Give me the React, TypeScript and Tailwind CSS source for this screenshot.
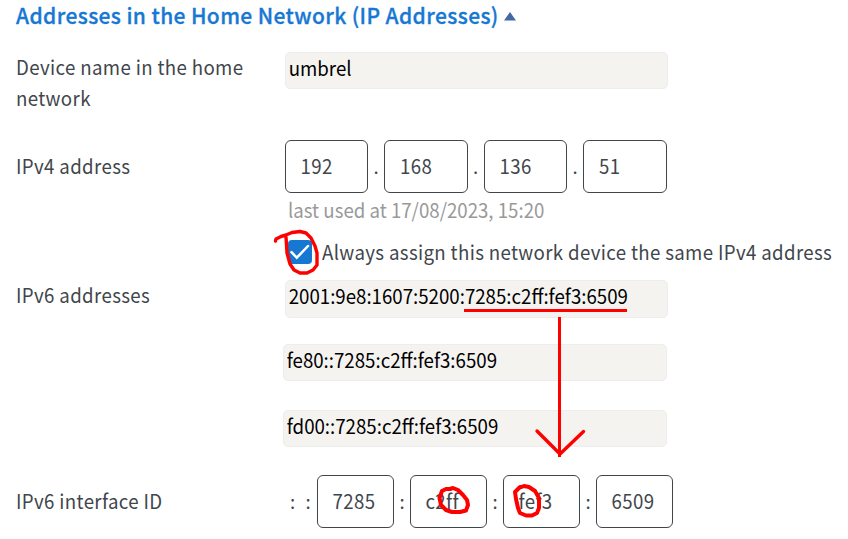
import type { ReactNode } from "react";

const ipv4 = ["192", "168", "136", "51"];
const interfaceId = ["7285", "c2ff", "fef3", "6509"];

function Tall({ children }: { children: ReactNode }) {
  return <span className="inline-block origin-[0_71%] scale-y-[1.075]">{children}</span>;
}

function Label({ lines, className = "" }: { lines: string[]; className?: string }) {
  return (
    <div className={`-mt-px w-[269px] shrink-0 leading-[31px] tracking-[0.36px] ${className}`}>
      {lines.map((line) => (
        <div key={line}>
          <Tall>{line}</Tall>
        </div>
      ))}
    </div>
  );
}

function ReadOnly({ children, className = "" }: { children: ReactNode; className?: string }) {
  return (
    <div
      className={`rounded-[5px] border border-[#ededed] bg-[#f5f3f0] px-[2.7px] text-[18.68px] leading-[30px] text-black ${className}`}
    >
      <Tall>{children}</Tall>
    </div>
  );
}

function Box({ children, className = "" }: { children: ReactNode; className?: string }) {
  return (
    <div
      className={`h-[53px] shrink-0 rounded-[6px] border border-[#3f464c] bg-white pl-[14.5px] leading-[49px] tracking-[0.36px] ${className}`}
    >
      <span className="inline-block origin-[0_63%] scale-y-[1.075]">{children}</span>
    </div>
  );
}

function Marks() {
  return (
    <svg
      className="pointer-events-none absolute left-0 top-0"
      width="848"
      height="539"
      fill="none"
      stroke="#ff0000"
      strokeWidth="3.4"
      strokeLinecap="round"
      strokeLinejoin="round"
    >
      <path d="M275.5 241L276 239L281 236.5L286 235L292 232.5L300 231.5L306 233L311 238L315 246L317 253L317 265L313 270L307 273L300 273L294 270L290 264L287 253L286 237" />
      <path d="M464 310.5H627" strokeWidth="3" strokeLinecap="butt" />
      <path d="M559.5 317V457" strokeWidth="3" strokeLinecap="butt" />
      <path d="M537 431L560 454L583.5 431.5" />
      <path d="M442 491L446 489L450 489L453 488L458 490L463 495L467 500L468 505L466 510.5L460 512L452 512L446 510L441 505L439.5 498L442 491" strokeWidth="4" />
      <path d="M519 488L524 486L529 487L535 491L539 498L539 508L537 513L532 515.5L526 515.5L520 513L518 508L516 499L515 492L520 487" strokeWidth="4" />
    </svg>
  );
}

export default function App() {
  return (
    <main className="relative h-[539px] w-[848px] overflow-hidden bg-white pl-4 font-['Noto_Sans_CJK_SC',sans-serif] text-[18.66px] text-[#3f464c]">
      <h2 className="flex h-[52px] items-start text-[21px] font-medium leading-[32px] tracking-[0.38px] text-[#1778d3] [-webkit-text-stroke:0.3px_#1778d3]">
        <span className="-mt-px inline-block origin-[0_73%] scale-y-[1.03]">Addresses in the Home Network (IP Addresses)</span>
        <svg className="ml-[5px] mt-3" width="12" height="9" viewBox="0 0 12 9" fill="#4268a5">
          <path d="M6 0L12 8.5H0Z" />
        </svg>
      </h2>

      <section className="flex h-[88px]">
        <Label lines={["Device name in the home", "network"]} />
        <ReadOnly className="h-[37px] w-[383px]">umbrel</ReadOnly>
      </section>

      <section className="flex h-[140px]">
        <Label className="pt-[11px]" lines={["IPv4 address"]} />
        <div>
          <div className="flex">
            {ipv4.map((part, i) => (
              <div key={i} className="flex">
                {i > 0 && <span className="w-[15.8px] mr-[0.5px] text-center leading-[52px]">.</span>}
                <Box className="w-[83.2px]">{part}</Box>
              </div>
            ))}
          </div>
          <p className="pl-[3px] pt-px leading-[31px] text-[#999999]">
            <Tall>last used at 17/08/2023, 15:20</Tall>
          </p>
          <div className="flex pl-[3px] pt-[11px]">
            <span className="mt-1 flex h-6 w-6 items-center justify-center rounded-[4px] bg-[#1778d3]">
              <svg width="20" height="16" viewBox="0 0 20 16" fill="none" stroke="#fff" strokeWidth="2.5" strokeLinecap="round">
                <path d="M1.5 8.2L6.8 13.7L18 2" />
              </svg>
            </span>
            <span className="whitespace-nowrap pl-[10px] leading-[31px] tracking-[0.35px]">
              <Tall>Always assign this network device the same IPv4 address</Tall>
            </span>
          </div>
        </div>
      </section>

      <section className="flex h-[195px]">
        <Label lines={["IPv6 addresses"]} />
        <div>
          <ReadOnly className="h-[38px] w-[383px]">2001:9e8:1607:5200:7285:c2ff:fef3:6509</ReadOnly>
          <ReadOnly className="-ml-[2px] mt-[26px] h-[37px] w-[384px]">fe80::7285:c2ff:fef3:6509</ReadOnly>
          <ReadOnly className="-ml-[2px] mt-[29px] h-[37px] w-[384px]">fd00::7285:c2ff:fef3:6509</ReadOnly>
        </div>
      </section>

      <section className="flex">
        <Label className="pt-[11px]" lines={["IPv6 interface ID"]} />
        <div className="flex leading-[51px]">
          <span className="w-[15px] text-center">:</span>
          <span className="mr-px w-4 text-center">:</span>
          {interfaceId.map((part, i) => (
            <div key={i} className="flex">
              {i > 0 && <span className="w-4 text-center">:</span>}
              <Box className="w-[77px]">{part}</Box>
            </div>
          ))}
        </div>
      </section>
      <Marks />
    </main>
  );
}
